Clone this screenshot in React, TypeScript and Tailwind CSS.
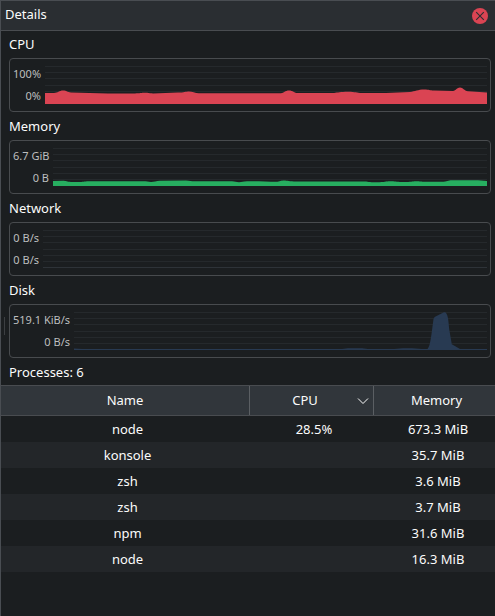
type ChartProps = {
  title: string;
  high: string;
  low: string;
  labelWidth: string;
  left: number;
  path?: string;
  fill?: string;
  baseline?: string;
};

const GRID = [7, 13, 19, 26, 32, 38];

function Chart({ title, high, low, labelWidth, left, path, fill, baseline }: ChartProps) {
  const width = 487 - left;
  return (
    <section className="mb-px">
      <h2 className="h-[27px] pl-2 leading-[27px]">{title}</h2>
      <div className="ml-2 mr-1 flex h-[54px] rounded-[4px] border border-[#484b4e] pl-[3px]">
        <div className={"flex shrink-0 flex-col pt-1 text-right text-[11px] leading-[22px] whitespace-nowrap text-[#bdbebf] " + labelWidth}>
          <span>{high}</span>
          <span>{low}</span>
        </div>
        <svg className="ml-1 shrink-0" width={width} height="52" viewBox={`${left} 0 ${width} 52`}>
          {GRID.map((y) => (
            <rect key={y} x={left} y={y} width={width} height="1" fill="#25292c" />
          ))}
          {baseline && <rect x={left} y="44" width={width} height="1" fill={baseline} />}
          {path && <path d={path} fill={fill} />}
        </svg>
      </div>
    </section>
  );
}

const CPU_PATH =
  "M45 45V34H54C58 34 59 31.6 63 31.6S67 33.4 71 33.6L108 34.4H135C140 34.4 141 33.8 145 33.8S149 34.4 153 34.4L178 33.6C184 33.4 186 32.4 189 32.4S195 34 199 34.2H281C284 34 285 31.4 289 31.4S294 34 298 34H334C338 33.6 340 32.8 348 32.8S356 34 362 34H386L410 33C415 32.6 418 30.6 424 30.6S429 31.6 434 31.6L453 32C456 31.6 457 28.6 460 28.6S464 32 468 32.2L487 33.4V45Z";

const MEMORY_PATH =
  "M53 45V40L63 39.8C66 39.8 67 40.8 71 41H80C84 41 85 40.3 90 40.3H143C147 40.3 148 41 151 41S156 39.8 160 39.7L186 39.4C190 39.4 191 40.3 195 40.3H232C235 40.4 236 41.2 239 41.2S243 40.4 247 40.3H259L271 40.8H276C280 40.4 281 39.5 284 39.5S290 40.5 296 40.5H363C368 40.5 369 41.3 376 41.3C386 41.3 385 40.3 390 40.3S396 41 402 41C413 41 411 40.2 416 40.2S420 40.7 426 40.7H442C447 40.5 448 39.2 452 39.2H478L487 40V45Z";

const DISK_PATH =
  "M74 45V43.5L82 44H342L348 43.2H362L368 44H394L403 43.2H412L422 44H427.5C429.5 42 430.5 36 431.5 29L433.5 14Q434 12.5 435.5 11.6L444 7.3Q446 6.6 446.6 9C448.5 12 448.5 19 449.5 26L451.8 39.3L460 44H487V45Z";

const PROCESSES = [
  ["node", "28.5%", "673.3 MiB"],
  ["konsole", "", "35.7 MiB"],
  ["zsh", "", "3.6 MiB"],
  ["zsh", "", "3.7 MiB"],
  ["npm", "", "31.6 MiB"],
  ["node", "", "16.3 MiB"],
];

const COLUMNS = "grid grid-cols-[249px_124px_121px] text-center";

export default function App() {
  return (
    <main className="relative h-[616px] w-[495px] overflow-hidden border-t border-l border-[#494d52] bg-[#1b1e20] font-['Noto_Sans',sans-serif] text-[13px] text-[#fcfcfc]">
      <header className="flex h-[30px] items-center justify-between border-b border-[#494c50] bg-[#2a2e32] pr-[7px] pl-1">
        <h1 className="pb-px">Details</h1>
        <button aria-label="Close" className="size-4">
          <svg width="16" height="16" viewBox="0 0 16 16">
            <circle cx="8" cy="8" r="8" fill="#da4453" />
            <path d="M4.2 4.2L11.8 11.8M11.8 4.2L4.2 11.8" stroke="#2a2e32" strokeWidth="1.1" />
          </svg>
        </button>
      </header>

      <Chart title="CPU" high="100%" low="0%" labelWidth="w-7" left={45} path={CPU_PATH} fill="#da4453" />
      <Chart title="Memory" high="6.7 GiB" low="0 B" labelWidth="w-9" left={53} path={MEMORY_PATH} fill="#27ae60" />
      <Chart title="Network" high="0 B/s" low="0 B/s" labelWidth="w-[26px]" left={43} baseline="#2e3338" />
      <Chart title="Disk" high="519.1 KiB/s" low="0 B/s" labelWidth="w-[57px]" left={74} path={DISK_PATH} fill="#283a52" baseline="#2e3338" />

      <h2 className="h-[26px] pl-2 leading-[26px]">Processes: 6</h2>
      <div className={COLUMNS + " h-[31px] border-y border-[#494c50] bg-[#31363b] leading-[29px]"}>
        <div className="border-r border-[#5b5f63]">Name</div>
        <div className="flex items-center border-r border-[#5b5f63] pr-1">
          <span className="flex-1 pl-[3px]">CPU</span>
          <svg width="12" height="8" viewBox="0 0 12 8" fill="none" stroke="#fcfcfc">
            <path d="M1 1.5L6 6.5L11 1.5" />
          </svg>
        </div>
        <div className="pl-1">Memory</div>
      </div>
      <div>
        {PROCESSES.map(([name, cpu, memory], index) => (
          <div key={index} className={COLUMNS + " h-[26px] leading-[26px] even:bg-[#232629]"}>
            <span className="pl-1">{name}</span>
            <span className="pl-1">{cpu}</span>
            <span className="pl-[7px]">{memory}</span>
          </div>
        ))}
      </div>
      <div className="absolute top-[316px] left-[3px] h-[18px] w-px bg-[#3c3f42]" />
    </main>
  );
}
